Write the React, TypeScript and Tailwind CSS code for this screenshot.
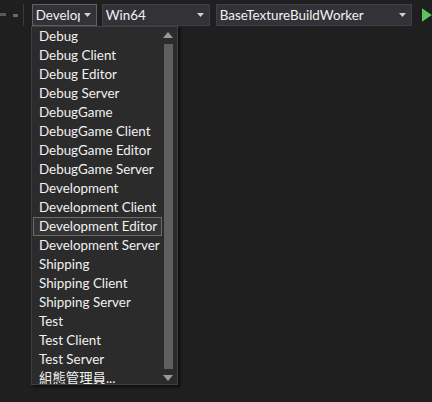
import React from "react";

const configs = [
  "Debug",
  "Debug Client",
  "Debug Editor",
  "Debug Server",
  "DebugGame",
  "DebugGame Client",
  "DebugGame Editor",
  "DebugGame Server",
  "Development",
  "Development Client",
  "Development Editor",
  "Development Server",
  "Shipping",
  "Shipping Client",
  "Shipping Server",
  "Test",
  "Test Client",
  "Test Server",
  "組態管理員...",
];

function Caret() {
  return (
    <svg width="7" height="4" viewBox="0 0 7 4" className="shrink-0">
      <path d="M0 0H7L3.5 4Z" fill="#d0d0d0" />
    </svg>
  );
}

export default function App() {
  return (
    <div
      className="relative w-[432px] h-[402px] bg-[#1f1f1f] text-[13.4px] text-[#f1f1f1] overflow-hidden"
      style={{ fontFamily: 'Lato, "Noto Sans CJK TC", sans-serif' }}
    >
      {/* toolbar */}
      <div className="flex items-center h-[30px]">
        <div className="w-[6px] h-[3px] bg-[#5a5a5a] mt-[-2px]" />
        <div className="ml-[7px] w-[5px] h-[3px] bg-[#6a6a6a]" />
        <div className="ml-[5px] w-px h-[22px] bg-[#3a3a3a]" />
        <div className="ml-[8px] flex items-center w-[66px] h-[22px] border border-[#626262] bg-[#333337] pl-[3px] pr-[5px]">
          <span className="w-[44px] overflow-hidden whitespace-nowrap leading-[20px]">Develop</span>
          <span className="flex-1" />
          <Caret />
        </div>
        <div className="ml-[5px] flex items-center w-[110px] h-[22px] border border-[#3f3f46] bg-[#333337] pl-[3px] pr-[5px]">
          <span className="flex-1 leading-[20px]">Win64</span>
          <Caret />
        </div>
        <div className="ml-[6px] flex items-center w-[200px] h-[22px] border border-[#3f3f46] bg-[#333337] pl-[3px] pr-[5px]">
          <span className="flex-1 leading-[20px]">BaseTextureBuildWorker</span>
          <Caret />
        </div>
        <svg width="10" height="14" viewBox="0 0 10 14" className="ml-[10px]">
          <path d="M0 0L10 7L0 14Z" fill="#5cc45c" />
        </svg>
      </div>

      {/* dropdown popup */}
      <div className="absolute left-[31px] top-[26px] w-[147px] h-[359px] bg-[#2b2b2b] border border-[#3f3f46] shadow-[2px_2px_3px_rgba(0,0,0,0.6)] flex overflow-hidden">
        <div className="flex-1 flex flex-col pl-px">
          {configs.map((c) => (
            <div
              key={c}
              className={
                c === "Development Editor"
                  ? "h-[19px] shrink-0 flex items-center pl-[5px] border border-[#6b6b6b] bg-[#333333] whitespace-nowrap"
                  : "h-[19px] shrink-0 flex items-center pl-[6px] whitespace-nowrap"
              }
            >
              {c}
            </div>
          ))}
        </div>
        <div className="w-[12px] mr-[3px] flex flex-col items-center pt-[5px] pb-[3px]">
          <svg width="10" height="6" viewBox="0 0 10 6">
            <path d="M0 6H10L5 0Z" fill="#9a9a9a" />
          </svg>
          <div className="w-[9px] flex-1 my-[6px] bg-[#5f5f5f]" />
          <svg width="10" height="6" viewBox="0 0 10 6">
            <path d="M0 0H10L5 6Z" fill="#9a9a9a" />
          </svg>
        </div>
      </div>
    </div>
  );
}
